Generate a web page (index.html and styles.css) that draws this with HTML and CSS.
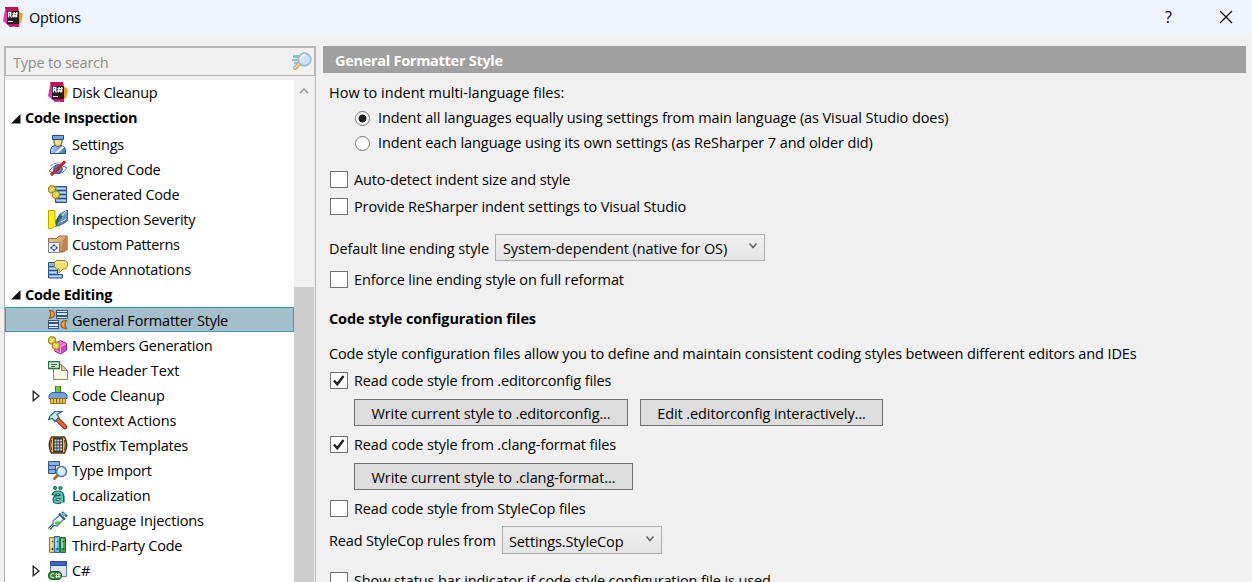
FILE: index.html
```html
<!DOCTYPE html>
<html lang="en">
<head>
<meta charset="utf-8">
<title>Options</title>
<link rel="stylesheet" href="styles.css">
</head>
<body>
<svg class="defs" width="0" height="0">
  <defs>
    <linearGradient id="steel" x1="0" y1="0" x2="1" y2="1"><stop offset="0" stop-color="#b5dcf4"/><stop offset="1" stop-color="#326a9c"/></linearGradient>
    <linearGradient id="blue" x1="0" y1="0" x2="1" y2="0"><stop offset="0" stop-color="#aac9ef"/><stop offset="1" stop-color="#4c79bd"/></linearGradient>
    <linearGradient id="tan" x1="0" y1="0" x2="1" y2="1"><stop offset="0" stop-color="#f5cf98"/><stop offset="1" stop-color="#b67a3e"/></linearGradient>
    <symbol id="resharper" viewBox="0 0 20 20">
      <path d="M2 0h13l1 5-1 10H4z" fill="#c70e54"/><path d="M0 14l2-11 3 3v12z" fill="#e336a8"/><path d="M15 4l5 3-2 9-4 2z" fill="#f39b14"/><path d="M3 16h13v3l-9 1z" fill="#b91580"/><path d="M10 16h6v4h-4z" fill="#d80c62"/>
      <path d="M4 4h12v13H4z" fill="#1f2023"/>
      <path d="M5.500 10.500V5.500h2.300v2.400H5.500m1.500 0l1.500 2.600M11.200 5l-.8 5.500M13.800 5L13 10.500M9.500 6.700h5.200M9.200 9h5.200" stroke="#fff" stroke-width="1.300" fill="none"/><path d="M5 14h5v1H5z" fill="#fff"/>
    </symbol>
    <symbol id="lens" viewBox="0 0 20 20">
      <path d="M1 3h7v3H1zM0 7h7v2H0zM2 10h5v2H2z" fill="#7cc4dc"/><path d="M8 11l-5 5" stroke="#cba66d" stroke-width="4" stroke-linecap="round"/><path d="M8 11l-5 5" stroke="#f1d49b" stroke-width="2" stroke-linecap="round"/><circle cx="12.500" cy="7.500" r="6.300" fill="#c8e4f5" stroke="#a3b9cf" stroke-width="1.700"/><path d="M8.500 7a4 4 0 0 1 5-3.500" fill="none" stroke="#fff" stroke-width="1.500"/>
    </symbol>
    <symbol id="person" viewBox="0 0 20 20">
      <path d="M2.500 18.500v-4Q3 11 7 10.500h6q4 .5 4.500 4v4z" fill="url(#blue)" stroke="#214d82"/><path d="M7 18L14 11l2.500 1L10 18z" fill="#e5f2ff"/><path d="M6 4.500h8V8q-1 3.500-4 3.500T6 8z" fill="#f8d58c" stroke="#6e4b22"/><path d="M4.500.5h11v4h-11z" fill="#73a4dc" stroke="#1c477e"/>
    </symbol>
    <symbol id="eye" viewBox="0 0 20 20">
      <path d="M1 11Q8 1 19 8q-7 10-18 3z" fill="#f3f7fe" stroke="#71779e"/><path d="M2 6q7-5 13-2" stroke="#9795b2" fill="none"/><circle cx="10" cy="9" r="4.200" fill="#4a91df" stroke="#1c3e7c"/><circle cx="10" cy="9" r="1.500" fill="#122450"/><path d="M3 15L17 1.500" stroke="#8e1116" stroke-width="2.800"/><path d="M3 15L17 1.500" stroke="#ec1e21" stroke-width="1.900"/>
    </symbol>
    <symbol id="generated" viewBox="0 0 20 20">
      <path d="M7.500 1.500h11v4h-11zM10.500 5.500h8v4h-8zM10.500 9.500h8v4h-8zM7.500 13.500h11v4h-11z" fill="#79a8e2" stroke="#284c83"/><path d="M9 3.500h9M11 7.500h7M11 11.500h7M9 15.500h9" stroke="#b7d4f5"/><use href="#gears"/>
    </symbol>
    <symbol id="gears" viewBox="0 0 20 20">
      <g fill="#f4e650" stroke="#a08a16" stroke-width="1.200"><path d="M2.500.8h3l2 2v3l-2 2h-3l-2-2v-3z"/><path d="M6.500 6.200h3l2 2v3l-2 2h-3l-2-2v-3z"/></g><path d="M4 2v5M1.500 4.300h5M8 7.300v5M5.500 9.800h5" stroke="#b39a1c"/><path d="M4 3v3M2.500 4.300h3M8 8.300v3M6.500 9.800h3" stroke="#fff8ad"/>
    </symbol>
    <symbol id="severity" viewBox="0 0 20 20">
      <path d="M.5.500H7v8l1 3 4 3v1l-5 1-4 2H.5z" fill="#fff200" stroke="#b5a500"/><path d="M7.500 12L12 4l7.500-4v11l-5 3-6 2z" fill="url(#steel)" stroke="#456b85"/><path d="M8 16l7-10-3-2-4 7z" fill="#326078"/><path d="M14 6l4-5M13 12l5-3" stroke="#ddeffa"/>
    </symbol>
    <symbol id="patterns" viewBox="0 0 20 20">
      <path d="M.5 7V3.500h8L11 1h8v14l-4 2H8" fill="url(#tan)" stroke="#9a632e"/><path d="M15 5l4.500-4v14l-4.500 2z" fill="#bd834c"/><path d="M.5 7.500h11v10H.5z" fill="#edf3fc" stroke="#7783a0"/><path d="M6 9l2 2.300H4zm0 7.500l2-2.300H4zM2 12.800l2.300-2v4zm8 0l-2.300-2v4z" fill="#334365"/>
    </symbol>
    <symbol id="annotation" viewBox="0 0 20 20">
      <path d="M.5 2.500h10v4H.5zM.5 6.500h9v4h-9zM.5 10.500h9v4h-9zM.5 14.500h14v3.500H.5z" fill="#83b5eb" stroke="#28558c"/><path d="M2 8.500h6M2 12.500h6M2 16.500h11" stroke="#bbdcfa"/><path d="M8.500.5h9l2 2v4l-2 2.500H15l-4 4v-4H8.500l-2-2.500v-4z" fill="#f2dd72" stroke="#9c8324"/><path d="M9 2.500h8" stroke="#fff6bf"/>
    </symbol>
    <symbol id="formatter" viewBox="0 0 20 20">
      <path d="M8 0h12v9H8zM0 10h11v9H0z" fill="#33547e"/><path d="M9 1h10v1H9zM9 3h10v2H9zM9 7h10v1H9zM1 11h9v1H1zM1 14h9v2H1zM1 17h9v1H1z" fill="#d8e8fb"/>
      <path d="M1.500.5q5 .5 5 3.800t-5 4q2.500-4 0-7.800zM18.500 10.500q-5.500.2-5.500 4t5.500 4q-3-4 0-8z" fill="#f7a83c" stroke="#9a5519" stroke-width="1.200"/>
    </symbol>
    <symbol id="members" viewBox="0 0 20 20">
      <path d="M12.500 4.500l6 3v7l-6 3.500-6-3V8z" fill="#f46ee9" stroke="#a22294"/><path d="M7 8l5.500 2.700L18 7.800V14l-5.500 3.500z" fill="#d141ca"/><path d="M7 8l5.500 2.700L18 7.800M12.500 11v6" fill="none" stroke="#ffb2f8"/><use href="#gears"/>
    </symbol>
    <symbol id="file" viewBox="0 0 20 20">
      <path d="M5.500 3.500h8l6 6v9h-14z" fill="#fff9e8" stroke="#958059"/><path d="M13.500 3.500v6h6z" fill="#dfc498" stroke="#958059"/><path d="M.5.500h11v7H.5z" fill="#d8f2d4" stroke="#257041" stroke-width="1.300"/><path d="M3 3.500h6M3 5.500h4" stroke="#267246"/>
    </symbol>
    <symbol id="broom" viewBox="0 0 20 20">
      <path d="M7.500 0h5v8h-5z" fill="#73c52c" stroke="#3e7717"/><path d="M1 12.500v-3q1-3 4-3h10q3 0 4 3v3z" fill="#6fa2e5" stroke="#375f9d"/><path d="M2.500 12.500h15v5h-15z" fill="#ecc74b" stroke="#95701d"/><path d="M5.500 13v5M8.500 13v5M11.500 13v5M14.500 13v5" stroke="#8e6817"/>
    </symbol>
    <symbol id="hammer" viewBox="0 0 20 20">
      <path d="M9 8l8 8" stroke="#8c2716" stroke-width="4.600" stroke-linecap="round"/><path d="M9 8l8 8" stroke="#ef6037" stroke-width="2.800" stroke-linecap="round"/><path d="M.6 8.500L2 5l5-4.500h7l-5 3 2 3-4 4-2.500-3z" fill="#c4edf2" stroke="#256877" stroke-width="1.200"/>
    </symbol>
    <symbol id="postfix" viewBox="0 0 20 20">
      <path d="M3.500 1Q-1 9 3.500 17h13Q21 9 16.500 1z" fill="#eac068" stroke="#4c3514" stroke-width="1.500"/><path d="M3.500 4Q2 9 3.500 14M16.500 4q1.500 5 0 10" fill="none" stroke="#573c13"/><path d="M5.500 2h9v14h-9z" fill="#303541" stroke="#4c3514"/><path d="M6.500 4.500h7.500M6.500 7.500h7.500M6.500 10.500h7.500M6.500 13.500h7.500" stroke="#cbd2df" stroke-width="2" stroke-dasharray="2 .8"/>
    </symbol>
    <symbol id="import" viewBox="0 0 20 20">
      <path d="M.5.500h11v4H.5zM.5 4.500h7v4h-7zM.5 8.500h7v4h-7z" fill="#86b0e4" stroke="#315383"/><path d="M10 14l-3.500 3.500" stroke="#b66e2b" stroke-width="3" stroke-linecap="round"/><circle cx="13.500" cy="10.500" r="5" fill="#d2efff" stroke="#477ba4" stroke-width="1.500"/><path d="M11 10q0-2 3-2.500" stroke="#fff" fill="none" stroke-width="1.500"/>
    </symbol>
    <symbol id="local" viewBox="0 0 20 20">
      <circle cx="7" cy="2" r="1.600" fill="#25b7a1" stroke="#126257"/><circle cx="12.500" cy="2" r="1.600" fill="#25b7a1" stroke="#126257"/><path d="M5.500 9.500Q6 6.500 10 6.500t4.500 4v6M14 11q-7.500-1-7.500 3 0 2 3.500 2 4 0 4-4" fill="none" stroke="#155f57" stroke-width="4.200"/><path d="M6 8.500q1-2.500 5-2 3 .5 3 3.500v7M13.500 11q-7-.5-7 2.500t3.500 2.500 4-3.500" fill="none" stroke="#5cc6b6" stroke-width="2"/>
    </symbol>
    <symbol id="inject" viewBox="0 0 20 20">
      <path d="M1 18l6-6" stroke="#255579" stroke-width="3"/><path d="M1 18l6-6" stroke="#c9e4f0"/><path d="M5 10l7-6 4 4-7 7-4-.5z" fill="#edf7f7" stroke="#5d8193" stroke-width="1.300"/><path d="M7 10.500h6l-4 3.500-2-1z" fill="#49c92e"/><path d="M11 2.500l6 6M14 1l5 4.500" stroke="#24597d" stroke-width="2.200"/><path d="M14 5l3-3" stroke="#79b4d5" stroke-width="3"/>
    </symbol>
    <symbol id="books" viewBox="0 0 20 20">
      <path d="M1.500 1.500h5v15h-5z" fill="#f6c557" stroke="#a66f22"/><path d="M6.500.5h5v16h-5z" fill="#64b9ed" stroke="#256894"/><path d="M12.500 1.500h5v15h-5z" fill="#42ab45" stroke="#24662e"/><path d="M3 3v9M8 2v10M14 3v9" stroke="#e5f8ff"/><path d="M4.500 5v1M4.500 12v2M9.500 5v1M9.500 12v2M15.500 5v1M15.500 12v2" stroke="#1a485b" stroke-width="1.600"/>
    </symbol>
    <symbol id="csharp" viewBox="0 0 20 20">
      <path d="M2.500.5h16v15h-16z" fill="#dce7f6" stroke="#6678a1"/><path d="M2.500.500h16v4h-16z" fill="#3969c4" stroke="#2b4b92"/><rect x=".5" y="10.500" width="13" height="8" rx="3.500" fill="#388539" stroke="#195a1f"/><path d="M6 12.700Q2.500 12 2.500 14.500T6 16.500M8.500 12v5M11 12v5M7.500 13.500h5M7.500 15.600h5" fill="none" stroke="#e5ffd9"/>
    </symbol>
    <symbol id="down" viewBox="0 0 10 8"><path d="M1.500 1.500L5 5.500l3.500-4" fill="none" stroke="#606060" stroke-width="1.500"/></symbol>
    <symbol id="check" viewBox="0 0 16 15"><path d="M3 7.500l3.300 3.800L12.500 3" fill="none" stroke="#212121" stroke-width="2.400"/></symbol>
    <symbol id="open" viewBox="0 0 10 10"><path d="M9.500 0v9.500H0z" fill="#111"/></symbol>
    <symbol id="closed" viewBox="0 0 9 12"><path d="M1.200 1.200v9.600L7 6z" fill="#fff" stroke="#222" stroke-width="1.300"/></symbol>
  </defs>
</svg>
<div class="window">
  <header class="titlebar">
    <svg class="logo"><use href="#resharper"/></svg><span class="title">Options</span>
    <span class="help">?</span>
    <svg class="close" viewBox="0 0 14 14"><path d="M1 1l12 12M13 1L1 13" stroke="#111" stroke-width="1.300"/></svg>
  </header>
  <div class="body">
    <aside class="sidebar">
      <div class="search"><span>Type to search</span><svg class="icon"><use href="#lens"/></svg></div>
      <div class="treebox">
        <ul class="tree">
          <li class="item first"><svg class="icon"><use href="#resharper"/></svg><span>Disk Cleanup</span></li>
          <li class="group"><svg><use href="#open"/></svg><span>Code Inspection</span></li>
          <li class="item"><svg class="icon"><use href="#person"/></svg><span>Settings</span></li>
          <li class="item"><svg class="icon"><use href="#eye"/></svg><span>Ignored Code</span></li>
          <li class="item"><svg class="icon"><use href="#generated"/></svg><span>Generated Code</span></li>
          <li class="item"><svg class="icon"><use href="#severity"/></svg><span>Inspection Severity</span></li>
          <li class="item"><svg class="icon"><use href="#patterns"/></svg><span class="tight">Custom Patterns</span></li>
          <li class="item"><svg class="icon"><use href="#annotation"/></svg><span class="loose">Code Annotations</span></li>
          <li class="group low"><svg><use href="#open"/></svg><span>Code Editing</span></li>
          <li class="item selected"><svg class="icon"><use href="#formatter"/></svg><span>General Formatter Style</span></li>
          <li class="item"><svg class="icon"><use href="#members"/></svg><span>Members Generation</span></li>
          <li class="item"><svg class="icon"><use href="#file"/></svg><span class="loose">File Header Text</span></li>
          <li class="item parent"><svg class="arrow"><use href="#closed"/></svg><svg class="icon"><use href="#broom"/></svg><span class="loose">Code Cleanup</span></li>
          <li class="item"><svg class="icon"><use href="#hammer"/></svg><span class="loose">Context Actions</span></li>
          <li class="item"><svg class="icon"><use href="#postfix"/></svg><span>Postfix Templates</span></li>
          <li class="item"><svg class="icon"><use href="#import"/></svg><span>Type Import</span></li>
          <li class="item"><svg class="icon"><use href="#local"/></svg><span class="loose">Localization</span></li>
          <li class="item"><svg class="icon"><use href="#inject"/></svg><span class="loose">Language Injections</span></li>
          <li class="item"><svg class="icon"><use href="#books"/></svg><span>Third-Party Code</span></li>
          <li class="item parent"><svg class="arrow"><use href="#closed"/></svg><svg class="icon"><use href="#csharp"/></svg><span>C#</span></li>
        </ul>
        <div class="scrollbar"><svg class="up" viewBox="0 0 10 8"><path d="M1 6l4-4 4 4" fill="none" stroke="#9a9a9a" stroke-width="1.700"/></svg><div class="thumb"></div></div>
      </div>
    </aside>
    <main class="page">
      <h1><span>General Formatter Style</span></h1>
      <div class="form">
        <div class="line intro"><span>How to indent multi-language files:</span></div>
        <div class="radio"><i class="dot on"></i><span>Indent all languages equally using settings from main language (as Visual Studio does)</span></div>
        <div class="radio"><i class="dot"></i><span>Indent each language using its own settings (as ReSharper 7 and older did)</span></div>
        <div class="check gap-l"><i class="box"></i><span>Auto-detect indent size and style</span></div>
        <div class="check"><i class="box"></i><span>Provide ReSharper indent settings to Visual Studio</span></div>
        <div class="field ending"><span>Default line ending style</span><div class="combo"><span>System-dependent (native for OS)</span><svg><use href="#down"/></svg></div></div>
        <div class="check gap-s"><i class="box"></i><span>Enforce line ending style on full reformat</span></div>
        <h2><span>Code style configuration files</span></h2>
        <div class="line note"><span>Code style configuration files allow you to define and maintain consistent coding styles between different editors and IDEs</span></div>
        <div class="check"><i class="box"><svg><use href="#check"/></svg></i><span>Read code style from .editorconfig files</span></div>
        <div class="buttons"><div class="button write"><span>Write current style to .editorconfig...</span></div><div class="button edit"><span>Edit .editorconfig interactively...</span></div></div>
        <div class="check gap-s"><i class="box"><svg><use href="#check"/></svg></i><span>Read code style from .clang-format files</span></div>
        <div class="buttons"><div class="button clang"><span>Write current style to .clang-format...</span></div></div>
        <div class="check gap-s"><i class="box"></i><span>Read code style from StyleCop files</span></div>
        <div class="field rules"><span>Read StyleCop rules from</span><div class="combo"><span>Settings.StyleCop</span><svg><use href="#down"/></svg></div></div>
        <div class="check status"><i class="box"></i><span>Show status bar indicator if code style configuration file is used</span></div>
      </div>
    </main>
  </div>
</div>
</body>
</html>
```

FILE: styles.css
```css
* { box-sizing: border-box; }
body { margin: 0; overflow: hidden; background: #f0f0f0; color: #000; font: 14.5px/20px "Open Sans", "Noto Sans", sans-serif; letter-spacing: -0.22px; white-space: nowrap; }
svg { display: block; flex: none; }
.defs { position: absolute; }
.window { height: 582px; display: flex; flex-direction: column; overflow: hidden; }
.titlebar { height: 36px; flex: none; display: flex; align-items: center; background: #eff3fb; padding-left: 3px; }
.logo { width: 20px; height: 20px; margin-top: -2px; }
.title { margin-left: 6px; }
.help { margin: -2px 0 0 auto; width: 10px; font-size: 16px; }
.close { width: 14px; height: 14px; margin: -2px 19px 0 44px; }
.body { flex: 1; min-height: 0; display: flex; padding: 10px 6px 0 4px; gap: 7px; }
.sidebar { width: 312px; flex: none; display: flex; flex-direction: column; }
.search { height: 30px; flex: none; border: 2px solid #b6b6b6; border-bottom-width: 1px; display: flex; align-items: center; justify-content: space-between; padding: 3px 2px 0 7px; color: #8c8c8c; }
.search .icon { margin-top: -3px; }
.treebox { flex: 1; min-height: 0; display: flex; border: 1px solid #b6b6b6; border-width: 0 1px; padding-top: 4px; overflow: hidden; }
.tree { width: 289px; flex: none; margin: 0; padding: 0; list-style: none; background: #fff; }
.item { height: 25px; display: flex; align-items: center; padding: 2px 0 0 43px; gap: 4px; }
.icon { width: 20px; height: 20px; }
.first { padding-top: 0; }
.first .icon { margin-top: -1px; }
.tight { letter-spacing: -0.36px; }
.loose { letter-spacing: -0.12px; }
.group { height: 26px; display: flex; align-items: center; gap: 4px; padding-left: 6px; font-weight: 700; }
.group svg { width: 10px; height: 10px; margin-top: 2px; }
.low { padding-top: 2px; }
.low svg { margin-top: 0; }
.selected { background: #a3bfcc; border: 1px solid #3f98bb; padding: 2px 0 0 42px; }
.selected .icon { margin-top: -1px; }
.parent { padding-left: 27px; }
.arrow { width: 9px; height: 12px; margin-right: 3px; }
.scrollbar { flex: 1; display: flex; flex-direction: column; align-items: center; margin-right: 1px; }
.up { width: 10px; height: 8px; margin: 7px 0 192px; }
.thumb { width: 100%; flex: 1; background: #cdcdcd; }
.page { flex: 1; min-width: 0; }
h1 { height: 27px; margin: 0; padding: 5px 12px; background: #a0a0a0; color: #fff; font-size: 14.5px; line-height: 20px; letter-spacing: -0.28px; }
.form { padding: 7px 0 0 6px; letter-spacing: -0.12px; }
.line { height: 26px; line-height: 26px; }
.intro { letter-spacing: 0; }
.radio { height: 25px; display: flex; align-items: center; padding-left: 26px; gap: 8px; letter-spacing: -0.09px; }
.radio span { margin-top: -2px; }
.dot { width: 15px; height: 15px; border: 1px solid #747474; border-radius: 50%; background: #fff; margin-top: -1px; }
.on { background: radial-gradient(circle, #212121 3.7px, #fff 4.3px); }
.check { height: 27px; display: flex; align-items: center; padding-left: 1px; gap: 6px; }
.box { width: 18px; height: 17px; border: 1px solid #707070; background: #fff; flex: none; }
.box svg { width: 16px; height: 15px; }
.gap-l { margin-top: 10px; }
.gap-s { margin-top: 5px; }
.field { display: flex; align-items: center; justify-content: space-between; }
.ending { width: 436px; height: 27px; margin-top: 14px; letter-spacing: -0.1px; }
.ending > span { margin-top: 2px; }
.rules { width: 333px; height: 28px; margin-top: 4px; }
.rules > span { margin-top: 1px; letter-spacing: -0.17px; }
.combo { height: 27px; border: 1px solid #acacac; background: linear-gradient(#f0f0f0, #e5e5e5); display: flex; align-items: center; justify-content: space-between; padding: 2px 6px 0 7px; }
.combo svg { width: 10px; height: 8px; margin-top: -5px; }
.ending .combo { width: 270px; }
.rules .combo { width: 160px; height: 28px; padding: 3px 6px 0; }
h2 { margin: 13px 0 0; font-size: 14.5px; height: 26px; line-height: 26px; }
.note { margin-top: 9px; }
.buttons { margin: 5px 0 0 25px; display: flex; gap: 12px; letter-spacing: -0.1px; }
.button { height: 27px; border: 1px solid #707070; background: #ddd; display: flex; justify-content: center; align-items: center; padding-top: 2px; }
.write { width: 274px; }
.edit { width: 243px; }
.clang { width: 279px; }
.status { margin-top: 13px; }
```
